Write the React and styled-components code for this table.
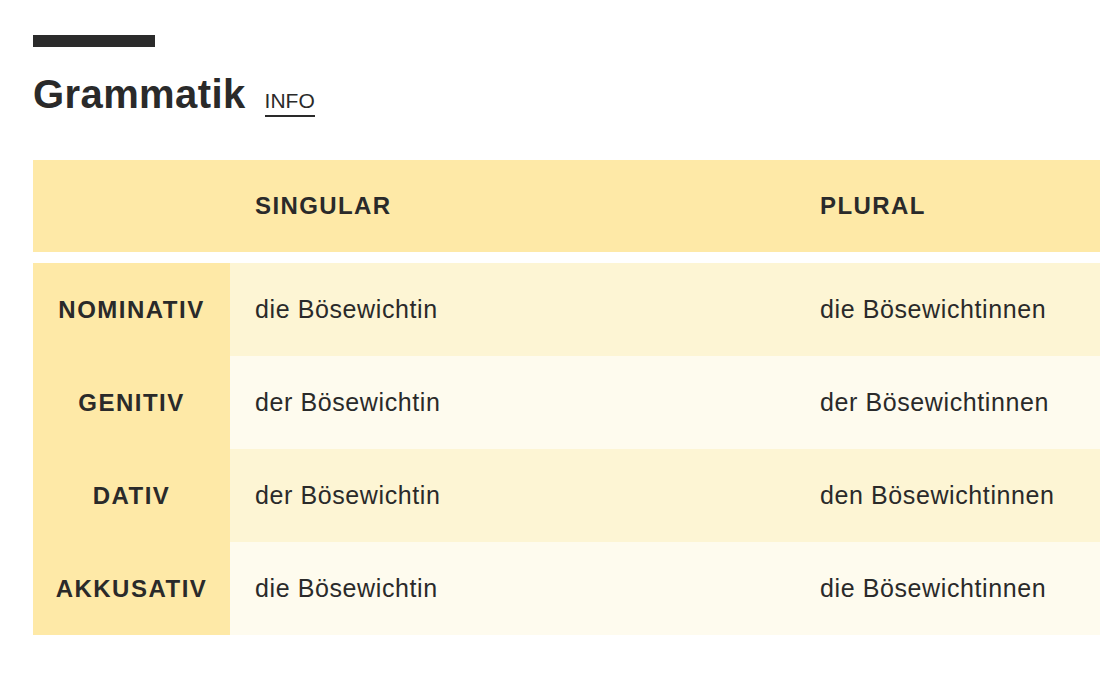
import React from 'react';
import styled, { createGlobalStyle } from 'styled-components';

const GlobalStyle = createGlobalStyle`
  html, body {
    margin: 0;
    padding: 0;
    background: #ffffff;
    overflow: hidden;
  }
  body {
    font-family: "Liberation Sans", Arial, sans-serif;
    color: #2a2a2a;
  }
`;

const Page = styled.section`
  padding: 35px 0 0 33px;
`;

const Bar = styled.div`
  width: 122px;
  height: 12px;
  background: #2b2b2b;
`;

const TitleRow = styled.div`
  display: flex;
  align-items: baseline;
  gap: 19px;
  margin-top: 27px;
`;

const Title = styled.h2`
  margin: 0;
  font-size: 40px;
  line-height: 40px;
  font-weight: 700;
  letter-spacing: 0.4px;
  color: #2a2a2a;
`;

const InfoLink = styled.a`
  font-size: 21px;
  line-height: 22px;
  font-weight: 400;
  color: #2a2a2a;
  text-decoration: none;
  border-bottom: 2px solid #2a2a2a;
  padding-bottom: 3px;
  cursor: pointer;
`;

const Table = styled.div`
  margin-top: 43px;
`;

const Row = styled.div`
  display: grid;
  grid-template-columns: 197px 565px 1fr;
  height: ${p => (p.$head ? 92 : 93)}px;
  margin-bottom: ${p => (p.$head ? 11 : 0)}px;
  background: ${p => p.$bg};
`;

const Cell = styled.div`
  display: flex;
  align-items: center;
  padding-left: 25px;
  white-space: nowrap;
  font-size: ${p => (p.$bold ? 24 : 25)}px;
  letter-spacing: ${p => (p.$bold ? 1.4 : 0.6)}px;
  font-weight: ${p => (p.$bold ? 700 : 400)};
`;

const LabelCell = styled.div`
  display: flex;
  align-items: center;
  justify-content: center;
  background: #fee9a7;
  font-size: 24px;
  font-weight: 700;
  letter-spacing: 1.5px;
`;

const rows = [
  ['NOMINATIV', 'die Bösewichtin', 'die Bösewichtinnen'],
  ['GENITIV', 'der Bösewichtin', 'der Bösewichtinnen'],
  ['DATIV', 'der Bösewichtin', 'den Bösewichtinnen'],
  ['AKKUSATIV', 'die Bösewichtin', 'die Bösewichtinnen'],
];

const App = () => (
  <>
    <GlobalStyle />
    <Page>
      <Bar />
      <TitleRow>
        <Title>Grammatik</Title>
        <InfoLink>INFO</InfoLink>
      </TitleRow>
      <Table>
        <Row $head $bg="#fee9a7">
          <div />
          <Cell $bold>SINGULAR</Cell>
          <Cell $bold>PLURAL</Cell>
        </Row>
        {rows.map(([label, sing, plur], i) => (
          <Row key={label} $bg={i % 2 === 0 ? '#fdf5d4' : '#fefbee'}>
            <LabelCell>{label}</LabelCell>
            <Cell>{sing}</Cell>
            <Cell>{plur}</Cell>
          </Row>
        ))}
      </Table>
    </Page>
  </>
);

export default App;
